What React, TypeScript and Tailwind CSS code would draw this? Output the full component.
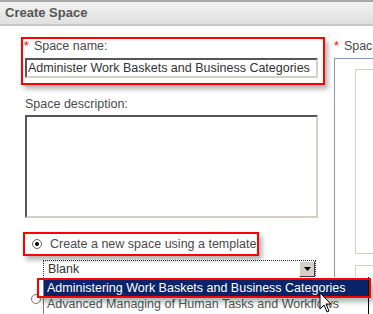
import React from "react";

const font = { fontFamily: '"Liberation Sans", Arial, sans-serif' };

function RedBox({ className }: { className: string }) {
  return (
    <div
      className={`pointer-events-none absolute border-2 border-[#ff0000] shadow-[3px_4px_5px_rgba(0,0,0,0.3)] ${className}`}
    />
  );
}

export default function App() {
  return (
    <div className="relative h-[314px] w-[373px] overflow-hidden bg-white text-[#4a4a4a]" style={font}>
      {/* Header */}
      <div className="flex h-[26px] items-center border-t-2 border-b-2 border-t-[#a8a8a8] border-b-[#c8c8c8] bg-gradient-to-b from-[#f2f2f2] to-[#e0e0e0] pl-[5px]">
        <span className="text-[13px] font-bold text-[#555]">Create Space</span>
      </div>

      <div className="flex">
        {/* Left column */}
        <div className="ml-[24px] flex w-[294px] flex-col pt-[12px]">
          <div className="flex h-[16px] items-center text-[12.5px]">
            <span className="mr-[5px] text-[#ff0000]">*</span>
            <span>Space name:</span>
          </div>
          <div className="ml-[1px] mt-[4px] flex h-[20px] w-[293px] items-center border-2 border-t-[#555] border-l-[#555] border-r-[#d4d0c8] border-b-[#d4d0c8] bg-white pl-[1px] text-[12.5px] text-[#333]">
            Administer Work Baskets and Business Categories
          </div>
          <div className="ml-[1px] mt-[17px] h-[16px] text-[12.5px]">Space description:</div>
          <div className="ml-[1px] mt-[4px] h-[103px] w-[293px] border-2 border-t-[#555] border-l-[#555] border-r-[#d4d0c8] border-b-[#d4d0c8] bg-white" />
          <div className="mt-[18px] flex h-[16px] items-center text-[12.5px]">
            <span className="ml-[8px] flex h-[10px] w-[10px] items-center justify-center rounded-full border border-[#666] bg-white">
              <span className="h-[4px] w-[4px] rounded-full bg-black" />
            </span>
            <span className="ml-[8px] whitespace-nowrap">Create a new space using a template</span>
          </div>
          <div className="ml-[19px] mt-[8px] flex h-[18px] w-[273px] items-center justify-between border border-dotted border-[#333] bg-white text-[12.5px]">
            <span className="pl-[4px] text-[#333]">Blank</span>
            <span className="flex h-[16px] w-[16px] items-center justify-center border border-t-[#fff] border-l-[#fff] border-r-[#404040] border-b-[#404040] bg-[#d4d0c8]">
              <svg width="7" height="4" viewBox="0 0 7 4">
                <path d="M0 0H7L3.5 4Z" fill="#000" />
              </svg>
            </span>
          </div>
          <div className="mt-[16px] flex h-[10px] items-center">
            <span className="ml-[7px] h-[10px] w-[10px] rounded-full border border-[#777] bg-white" />
          </div>
        </div>

        {/* Right column */}
        <div className="ml-[16px] flex min-w-0 flex-1 flex-col pt-[12px]">
          <div className="flex h-[16px] items-center whitespace-nowrap text-[12.5px]">
            <span className="mr-[5px] text-[#ff0000]">*</span>
            <span>Spac</span>
          </div>
          <div className="mt-[4px] h-[230px] border-l border-t border-[#7f9db9] pl-[20px] pt-[10px]">
            <div className="h-[185px] border-l border-t border-b border-[#d4d0c8]" />
            <div className="mt-[11px] h-[40px] border-l border-t border-[#d4d0c8]" />
          </div>
        </div>
      </div>

      {/* Dropdown list overlay */}
      <div className="absolute left-[43px] top-[277px] h-[40px] w-[326px] overflow-hidden whitespace-nowrap border-l border-r border-l-[#808080] border-r-black bg-white pt-[3px] text-[12.5px]">
        <div className="flex h-[16px] items-center bg-[#0a246a] pl-[3px] text-white">
          Administering Work Baskets and Business Categories
        </div>
        <div className="flex h-[16px] items-center pl-[3px] text-[#555]">
          Advanced Managing of Human Tasks and Workflows
        </div>
      </div>

      {/* Annotation boxes */}
      <RedBox className="left-[21px] top-[37px] h-[48px] w-[304px]" />
      <RedBox className="left-[23px] top-[232px] h-[24px] w-[236px]" />
      <RedBox className="left-[37px] top-[278px] h-[20px] w-[334px]" />

      {/* Cursor */}
      <svg className="absolute left-[319px] top-[292px]" width="14" height="22" viewBox="0 0 14 22">
        <path d="M1 1V17L5 13L8 20L10 19L7 12H12Z" fill="#fff" stroke="#000" strokeWidth="1" />
      </svg>
    </div>
  );
}
